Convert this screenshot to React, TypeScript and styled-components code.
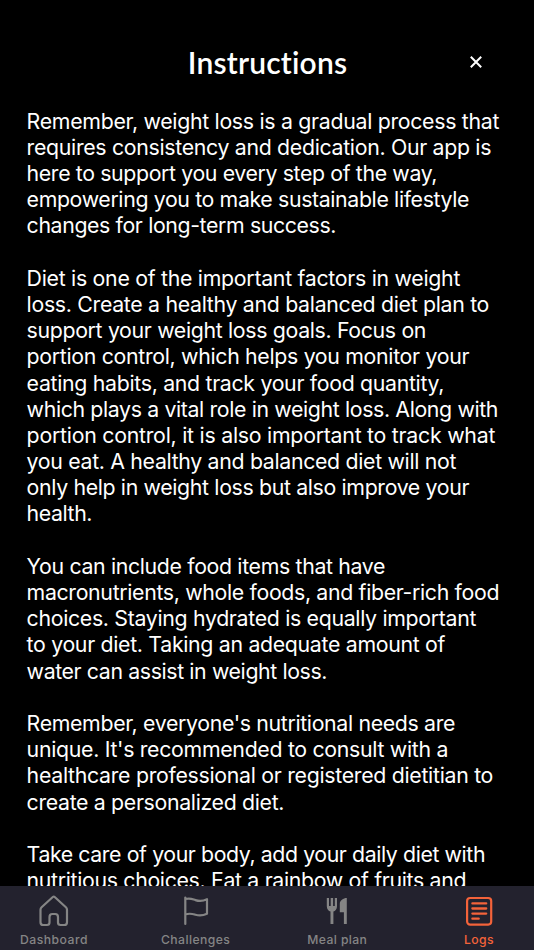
import React from 'react';
import styled, { createGlobalStyle } from 'styled-components';

const GlobalStyle = createGlobalStyle`
  * { box-sizing: border-box; }
  body { margin: 0; background: #000; }
`;

const Screen = styled.div`
  height: 100vh;
  display: flex;
  flex-direction: column;
  overflow: hidden;
  background: #000;
  color: #fff;
  font-family: Inter, 'Liberation Sans', sans-serif;
`;

const Header = styled.header`
  flex: none;
  height: 107.7px;
  padding: 42px 47px 0 48px;
  display: grid;
  grid-template-columns: 22px 1fr 22px;
  align-items: start;
`;

const Title = styled.h1`
  grid-column: 2;
  margin: 0;
  text-align: center;
  font-family: Lato, sans-serif;
  font-size: 30px;
  font-weight: 600;
  line-height: 41px;
  letter-spacing: 0.2px;
`;

const CloseButton = styled.button`
  width: 22px;
  height: 40px;
  padding: 0;
  border: 0;
  background: none;
  color: #fff;
  display: flex;
  align-items: center;
  justify-content: center;
`;

const Content = styled.main`
  flex: 1;
  min-height: 0;
  overflow: hidden;
  padding: 0 20px 0 26.6px;
`;

const Paragraph = styled.p`
  margin: 0 0 26.18px;
  font-size: 21.3px;
  line-height: 26.18px;
`;

const Line = styled.span<{ $tracking: number }>`
  display: block;
  white-space: nowrap;
  letter-spacing: ${(p) => p.$tracking}px;
`;

const TabBar = styled.nav`
  flex: none;
  height: 64px;
  padding: 7px 19px 0 18px;
  display: flex;
  justify-content: space-between;
  background: #23222e;
`;

const Tab = styled.a<{ $active?: boolean }>`
  width: 72px;
  display: flex;
  flex-direction: column;
  align-items: center;
  color: ${(p) => (p.$active ? '#f4633a' : '#858585')};
`;

const TabLabel = styled.span<{ $tracking: number }>`
  margin-top: 3px;
  font-size: 12.2px;
  font-weight: 500;
  line-height: 16px;
  white-space: nowrap;
  letter-spacing: ${(p) => p.$tracking}px;
`;

const TabIcon = styled.svg`
  display: block;
  width: 36px;
  height: 36px;
  fill: none;
  stroke: currentColor;
  stroke-width: 2.2;
  stroke-linecap: round;
  stroke-linejoin: round;
`;

const CloseIcon = styled.svg`
  width: 12px;
  height: 12px;
  stroke: currentColor;
  stroke-width: 2;
  fill: none;
`;

type TextLine = [text: string, tracking: number];

const paragraphs: TextLine[][] = [
  [
    ['Remember, weight loss is a gradual process that', -0.299],
    ['requires consistency and dedication. Our app is', -0.315],
    ['here to support you every step of the way,', -0.371],
    ['empowering you to make sustainable lifestyle', -0.362],
    ['changes for long-term success.', -0.376],
  ],
  [
    ['Diet is one of the important factors in weight', -0.285],
    ['loss. Create a healthy and balanced diet plan to', -0.307],
    ['support your weight loss goals. Focus on', -0.335],
    ['portion control, which helps you monitor your', -0.316],
    ['eating habits, and track your food quantity,', -0.311],
    ['which plays a vital role in weight loss. Along with', -0.365],
    ['portion control, it is also important to track what', -0.25],
    ['you eat. A healthy and balanced diet will not', -0.322],
    ['only help in weight loss but also improve your', -0.35],
    ['health.', -0.406],
  ],
  [
    ['You can include food items that have', -0.345],
    ['macronutrients, whole foods, and fiber-rich food', -0.337],
    ['choices. Staying hydrated is equally important', -0.319],
    ['to your diet. Taking an adequate amount of', -0.313],
    ['water can assist in weight loss.', -0.384],
  ],
  [
    ["Remember, everyone's nutritional needs are", -0.338],
    ["unique. It's recommended to consult with a", -0.305],
    ['healthcare professional or registered dietitian to', -0.298],
    ['create a personalized diet.', -0.333],
  ],
  [
    ['Take care of your body, add your daily diet with', -0.404],
    ['nutritious choices. Eat a rainbow of fruits and', -0.332],
  ],
];

const HomeIcon = () => (
  <TabIcon viewBox="0 0 36 36">
    <path d="M16.8 4 5.6 14.2Q4.5 15.2 4.5 16.8V29.2Q4.5 32 7.3 32H11Q13.5 32 13.5 29.5V24Q13.5 21 16.3 21H19.2Q22 21 22 24V29.5Q22 32 24.5 32H28.2Q31 32 31 29.2V16.8Q31 15.2 29.9 14.2L18.7 4Q17.75 3.1 16.8 4Z" />
  </TabIcon>
);

const FlagIcon = () => (
  <TabIcon viewBox="0 0 36 36">
    <path d="M7.3 31V4.5M7.3 6C12.5 4.6 14.5 6.2 17.5 7.1C21.5 8.5 25 8.2 29 6.2V20.8C25 22.7 21.5 23 17.5 21.8C14 20.7 12 19.8 7.3 21.5" />
  </TabIcon>
);

const CutleryIcon = () => (
  <TabIcon viewBox="0 0 36 36">
    <g fill="currentColor" stroke="none">
      <path d="M7.8 5H10V13H11.7V5H14.1V13H15.8V5H18V13.3C18 16.2 16.3 18 14.4 18.6V31H11.5V18.6C9.5 18 7.8 16.2 7.8 13.3Z" />
      <path d="M27.8 5V31H24.9V19.3H20.8V10.8C20.8 7.5 24.3 5 27.8 5Z" />
    </g>
  </TabIcon>
);

const LogsIcon = () => (
  <TabIcon viewBox="0 0 36 36">
    <rect x="6.1" y="5" width="24.1" height="26.6" rx="3" strokeWidth="2.2" />
    <path d="M11.4 10.4H25.2M11.4 15.5H25.2M11.4 20.6H25.2M11.4 25.7H17.7" strokeWidth="2.3" />
  </TabIcon>
);

const tabs = [
  { label: 'Dashboard', Icon: HomeIcon, tracking: 0.48 },
  { label: 'Challenges', Icon: FlagIcon, tracking: 0.42 },
  { label: 'Meal plan', Icon: CutleryIcon, tracking: 0.4 },
  { label: 'Logs', Icon: LogsIcon, tracking: 0.38, active: true },
];

export default function App() {
  return (
    <>
      <GlobalStyle />
      <Screen>
        <Header>
          <Title>Instructions</Title>
          <CloseButton aria-label="Close">
            <CloseIcon viewBox="0 0 12 12">
              <path d="M.8.8 11.2 11.2M11.2.8.8 11.2" />
            </CloseIcon>
          </CloseButton>
        </Header>
        <Content>
          {paragraphs.map((lines) => (
            <Paragraph key={lines[0][0]}>
              {lines.map(([text, tracking]) => (
                <Line key={text} $tracking={tracking}>
                  {text}
                </Line>
              ))}
            </Paragraph>
          ))}
        </Content>
        <TabBar>
          {tabs.map(({ label, Icon, tracking, active }) => (
            <Tab key={label} $active={active}>
              <Icon />
              <TabLabel $tracking={tracking}>{label}</TabLabel>
            </Tab>
          ))}
        </TabBar>
      </Screen>
    </>
  );
}
